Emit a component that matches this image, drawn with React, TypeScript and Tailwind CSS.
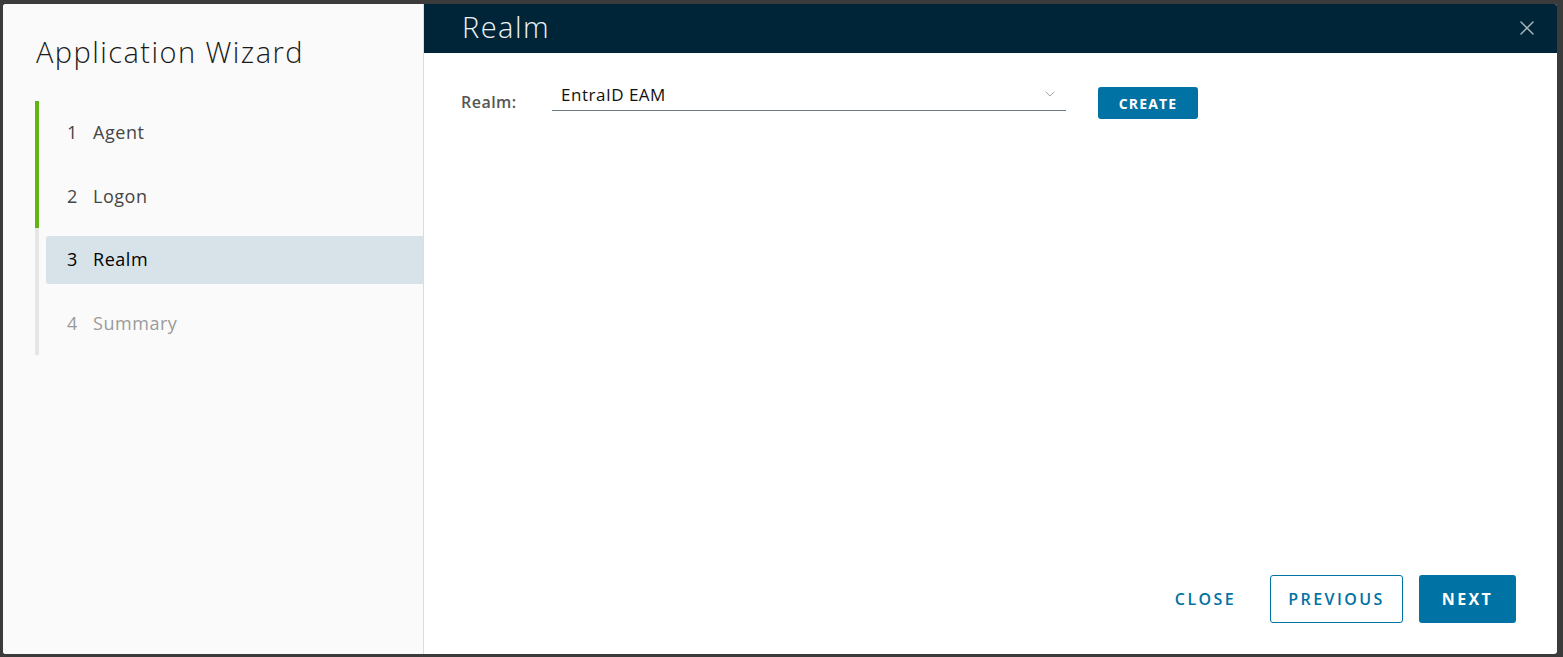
import { X, ChevronDown } from "lucide-react"

const steps = [
  { n: 1, label: "Agent", state: "done" },
  { n: 2, label: "Logon", state: "done" },
  { n: 3, label: "Realm", state: "active" },
  { n: 4, label: "Summary", state: "todo" },
]

const font = { fontFamily: "'Open Sans', 'Noto Sans', sans-serif" }

export default function App() {
  return (
    <div className="h-[657px] w-full bg-[#3b3b3b] pt-[4px] pl-[3px] pr-[6px] pb-[3px]" style={font}>
      <div className="flex h-full overflow-hidden rounded-[3px] bg-white">
        {/* sidebar */}
        <div className="w-[421px] shrink-0 border-r border-[#dcdcdc] bg-[#fafafa]">
          <h1 className="pl-[33px] pt-[30px] text-[29px] font-light leading-[36px] tracking-[0.05em] text-[#1b1b1b]">
            Application Wizard
          </h1>
          <div className="mt-[31px] ml-[32px]">
            {steps.map((s) => (
              <div
                key={s.n}
                className={
                  "flex h-[63.5px] items-center border-l-4 pl-[7px] " +
                  (s.state === "done" ? "border-[#60b515]" : "border-[#e6e6e6]")
                }
              >
                <div
                  className={
                    "flex h-12 w-full items-center rounded-l-[3px] pl-[21px] text-[18px] tracking-[0.03em] " +
                    (s.state === "active"
                      ? "bg-[#d8e3e9] font-medium text-[#000]"
                      : s.state === "done"
                        ? "text-[#454545]"
                        : "text-[#9a9a9a]")
                  }
                >
                  <span className="w-[26px]">{s.n}</span>
                  <span>{s.label}</span>
                </div>
              </div>
            ))}
          </div>
        </div>

        {/* content */}
        <div className="flex flex-1 flex-col">
          <div className="flex h-[49px] shrink-0 items-center justify-between bg-[#002538] pl-[38px] pr-[18px]">
            <h2 className="mb-[4px] text-[29px] font-light leading-none tracking-[0.05em] text-[#eef2f4]">Realm</h2>
            <X className="mb-[1px] h-[24px] w-[24px] text-[#a9b4ba]" strokeWidth={1.5} />
          </div>

          <div className="flex flex-1 flex-col justify-between">
            <div className="flex items-start pl-[37px] pt-[27px]">
              <span className="mt-[10px] w-[91px] text-[16px] font-semibold leading-[24px] tracking-[0.03em] text-[#565656]">
                Realm:
              </span>
              <div className="flex h-[31px] w-[514px] items-end justify-between border-b border-[#6b7b83] pb-[4px] pl-[9px] pr-[8px]">
                <span className="text-[17px] leading-[22px] tracking-[0.03em] text-[#111]">EntraID EAM</span>
                <ChevronDown className="mb-[4px] h-[16px] w-[16px] text-[#a5a5a5]" strokeWidth={1.5} />
              </div>
              <button className="mt-[7px] ml-[32px] h-[32px] w-[100px] rounded-[3px] bg-[#0072a3] text-[14px] font-bold tracking-[0.08em] text-white">
                CREATE
              </button>
            </div>

            <div className="flex items-center justify-end gap-4 pr-[41px] pb-[31px]">
              <button className="mr-[18px] h-12 text-[16px] font-semibold tracking-[0.15em] text-[#0072a3]">
                CLOSE
              </button>
              <button className="h-12 w-[133px] rounded-[3px] border border-[#0072a3] bg-white text-[16px] font-semibold tracking-[0.15em] text-[#0072a3]">
                PREVIOUS
              </button>
              <button className="h-12 w-[97px] rounded-[3px] bg-[#0072a3] text-[16px] font-bold tracking-[0.15em] text-white">
                NEXT
              </button>
            </div>
          </div>
        </div>
      </div>
    </div>
  )
}
